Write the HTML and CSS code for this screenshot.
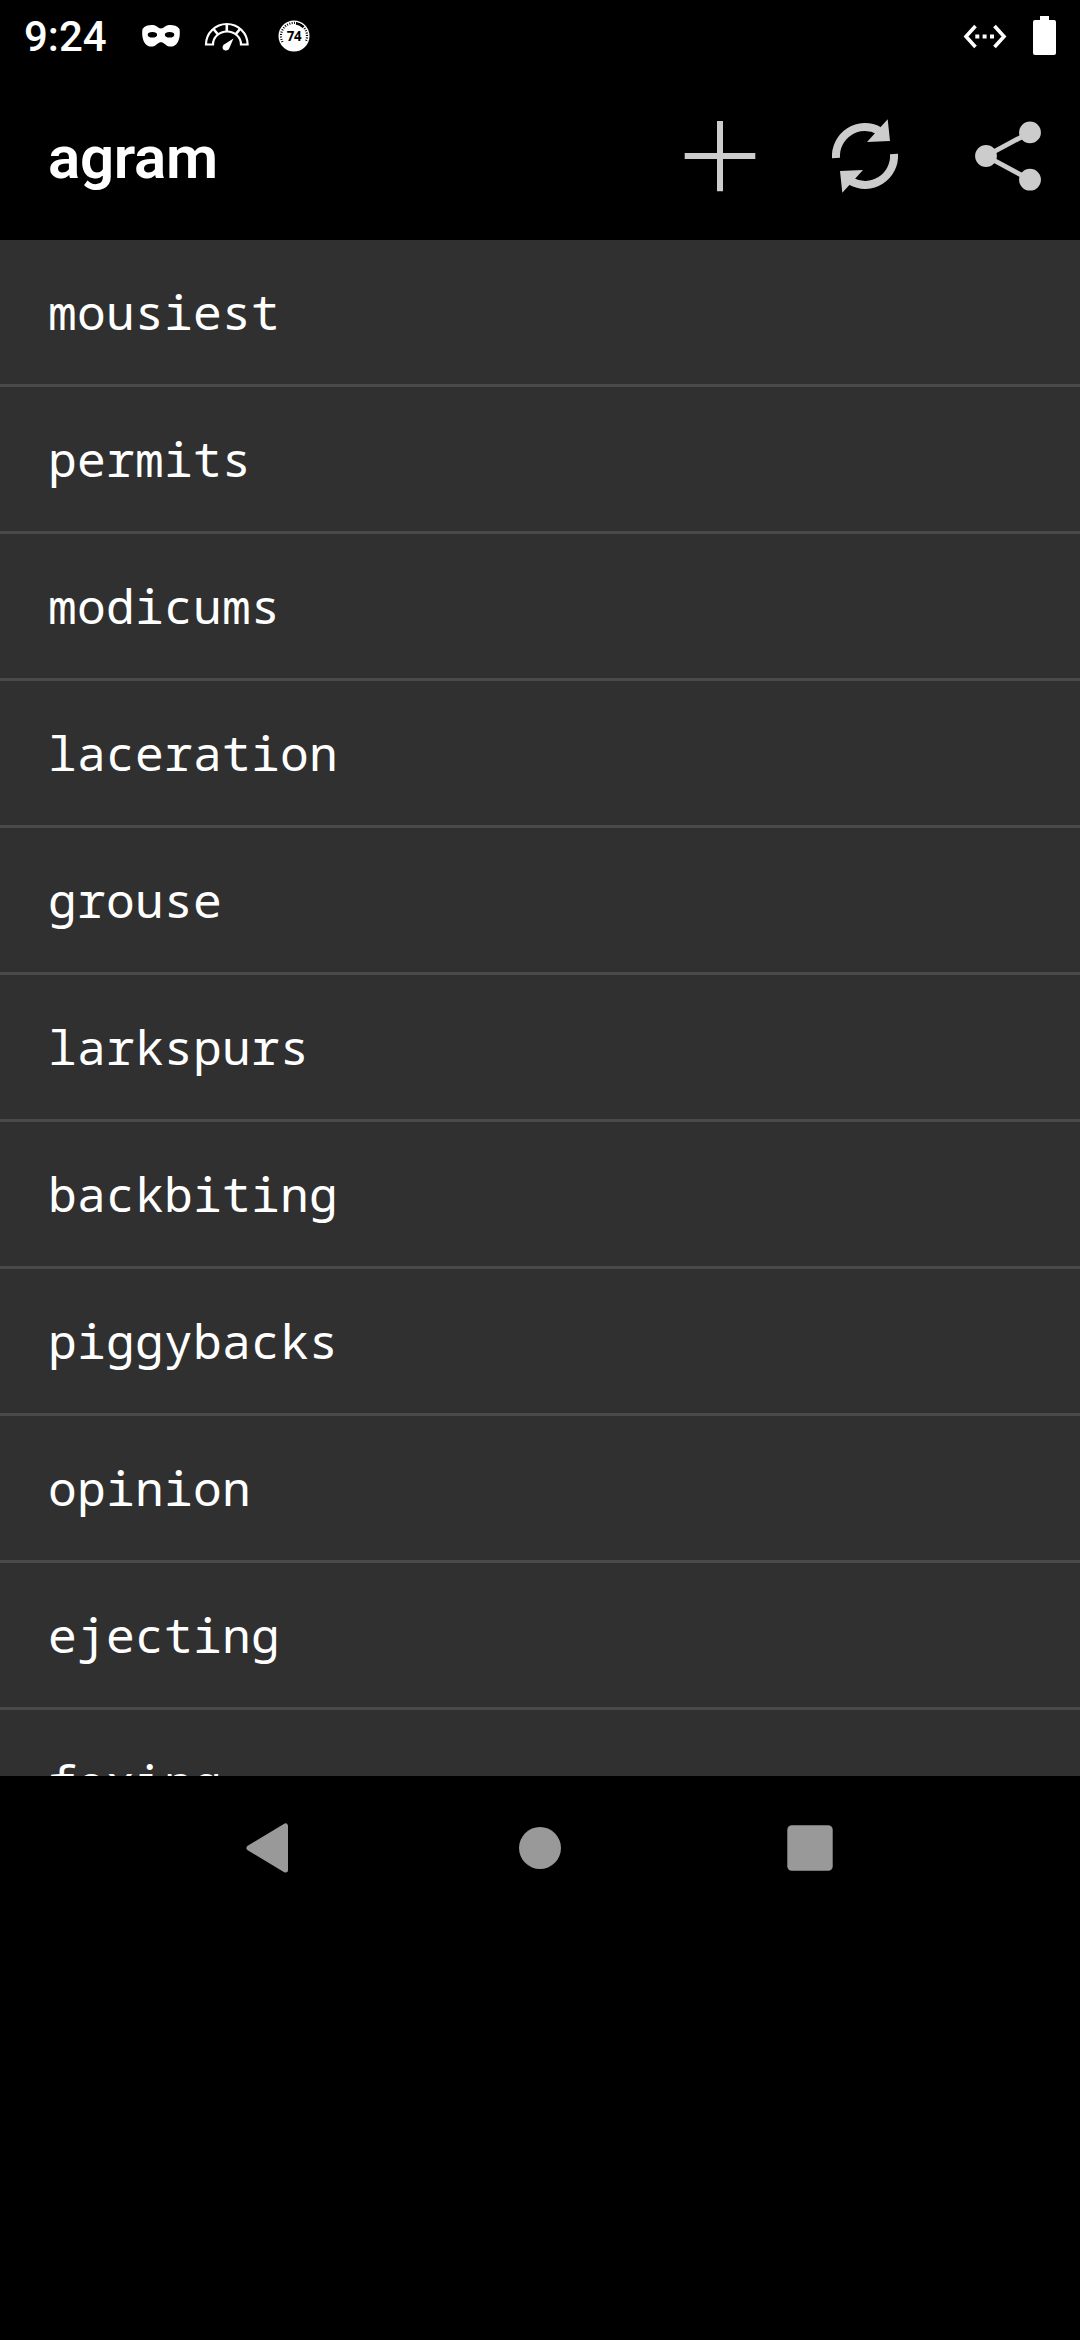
FILE: index.html
```html
<!DOCTYPE html>
<html lang="en">
<head>
<meta charset="utf-8">
<title>agram</title>
<link rel="stylesheet" href="styles.css">
</head>
<body>
<div class="status-bar">
  <span class="clock">9:24</span>
  <svg class="icon-mask" width="40" height="24" viewBox="0 0 40 24">
    <path fill="#fff" fill-rule="evenodd" d="M1.500 5C4 1.500 8 .8 12 1c4 .3 5 3.500 8 3.500s4-3.200 8-3.500c4-.2 8 .5 10.500 4 .8 5 .2 11-3 15-2 2.500-6 3.200-9 1.900-2.500-1-3.500-3.600-6.500-3.600s-4 2.600-6.500 3.600c-3 1.300-7 .6-9-1.900C1.300 16 .7 10 1.500 5zM6.700 10.800a4.700 2.800 0 0 0 9.400 0a4.700 2.800 0 0 0-9.400 0zm17.200 0a4.700 2.800 0 0 0 9.400 0a4.700 2.800 0 0 0-9.400 0z"/>
  </svg>
  <svg class="icon-gauge" width="46" height="30" viewBox="0 0 46 30">
    <g fill="none" stroke="#fff" stroke-width="2.200">
      <path d="M2 22.500a20.800 20.500 0 0 1 41.600 0h-6.600a14 13 0 0 0-28 0z"/>
      <path stroke-width="2.600" d="M22.800 2v8M9.500 7l4.500 5.500M36 7l-4.500 5.500"/>
    </g>
    <path fill="#fff" d="M29.500 16.500l-9.500 6c-2.500 2-1.500 6 1.500 6 2 .2 3.500-1 4-2.800z"/>
  </svg>
  <svg class="icon-battery-temp" width="32" height="32" viewBox="0 0 32 32">
    <circle cx="16" cy="16" r="15.500" fill="#fff"/>
    <path d="M4.500 22A13 13 0 1 1 27.500 22" fill="none" stroke="#000" stroke-width="2.200" stroke-dasharray="1 1.400"/>
    <path d="M18 3.200A13 13 0 0 1 25.500 7.200" fill="none" stroke="#000" stroke-width="2.600"/>
    <text x="15.900" y="21.200" class="gauge-value">74</text>
  </svg>
  <svg class="icon-ethernet" width="44" height="26" viewBox="0 0 44 26">
    <path d="M12.500 2L3 12.500l9.500 10.500M31.500 2L41 12.500l-9.500 10.500" fill="none" stroke="#fff" stroke-width="3.600"/>
    <path fill="#fff" d="M12.300 10.500h4v4h-4zM19.600 10.500h4v4h-4zM27 10.500h4v4h-4z"/>
  </svg>
  <svg class="icon-battery" width="23" height="39" viewBox="0 0 23 39">
    <path fill="#fff" d="M7 0h9v4h5a2 2 0 0 1 2 2v31a2 2 0 0 1-2 2H2a2 2 0 0 1-2-2V6a2 2 0 0 1 2-2h5z"/>
  </svg>
</div>
<header class="app-bar">
  <h1 class="title">agram</h1>
  <svg width="144" height="144" viewBox="0 0 144 144">
    <path fill="#ccc" d="M69 37h6v32h32.300v6H75v32.300h-6V75H36.700v-6H69z"/>
  </svg>
  <svg width="144" height="144" viewBox="0 0 144 144">
    <g fill="none" stroke="#ccc" stroke-width="8">
      <path d="M44 74A29 29 0 0 1 87 46.700"/>
      <path d="M102 70A29 29 0 0 1 59 97.300"/>
    </g>
    <path fill="#ccc" d="M95.700 35.300l2.300 21.700-23 1zM50.300 108.700L48 87l23-1z"/>
  </svg>
  <svg width="144" height="144" viewBox="0 0 144 144">
    <path d="M94 48.400L50 72l44 23.700" fill="none" stroke="#ccc" stroke-width="4.800"/>
    <g fill="#ccc"><circle cx="94" cy="48.400" r="10.900"/><circle cx="50" cy="72" r="10.900"/><circle cx="94" cy="95.700" r="10.900"/></g>
  </svg>
</header>
<ul class="word-list">
  <li>mousiest</li>
  <li>permits</li>
  <li>modicums</li>
  <li>laceration</li>
  <li>grouse</li>
  <li>larkspurs</li>
  <li>backbiting</li>
  <li>piggybacks</li>
  <li>opinion</li>
  <li>ejecting</li>
  <li>foxing</li>
</ul>
<nav class="nav-bar">
  <svg width="60" height="60" viewBox="0 0 60 60"><path fill="#999" stroke="#999" stroke-width="5" stroke-linejoin="round" d="M45.500 8v44L9 30z"/></svg>
  <svg width="60" height="60" viewBox="0 0 60 60"><circle cx="30" cy="30" r="21" fill="#999"/></svg>
  <svg width="60" height="60" viewBox="0 0 60 60"><rect x="7.300" y="7.300" width="45.400" height="45.400" rx="4.500" fill="#999"/></svg>
</nav>
</body>
</html>
```
FILE: styles.css
```css
* { box-sizing: border-box; }
body {
  margin: 0;
  width: 1080px;
  height: 2340px;
  overflow: hidden;
  display: flex;
  flex-direction: column;
  background: #000;
  color: #fff;
  font-family: Roboto, sans-serif;
}
svg { display: block; flex: none; }
.status-bar {
  height: 72px;
  flex: none;
  display: flex;
  align-items: flex-start;
  padding-left: 24px;
}
.clock {
  width: 117px;
  margin-top: 12px;
  font-size: 42px;
  line-height: 50px;
  font-weight: 500;
}
.icon-mask { margin-top: 24px; }
.icon-gauge { margin: 22px 0 0 23px; }
.icon-battery-temp { margin: 20px 0 0 28px; }
.gauge-value {
  font: 700 13.300px "Open Sans", sans-serif;
  letter-spacing: -0.4px;
  text-anchor: middle;
}
.icon-ethernet { margin: 24px 0 0 auto; }
.icon-battery { margin: 16px 24px 0 26px; }
.app-bar {
  height: 168px;
  flex: none;
  display: flex;
  align-items: center;
  padding-left: 48px;
}
.title {
  margin: 4px auto 0 0;
  font-size: 60px;
  line-height: 70px;
  font-weight: 600;
  letter-spacing: -0.3px;
}
.word-list {
  height: 1536px;
  flex: none;
  overflow: hidden;
  margin: 0;
  padding: 0;
  list-style: none;
  background: #303030;
}
.word-list li {
  height: 147px;
  padding-left: 48px;
  border-bottom: 3px solid #4a4a4a;
  font: 48px/144px "Droid Sans Mono", "Noto Sans Mono", "DejaVu Sans Mono", monospace;
  letter-spacing: 0.2px;
}
.nav-bar {
  height: 144px;
  flex: none;
  display: flex;
  justify-content: center;
  align-items: center;
  gap: 210px;
}
```
